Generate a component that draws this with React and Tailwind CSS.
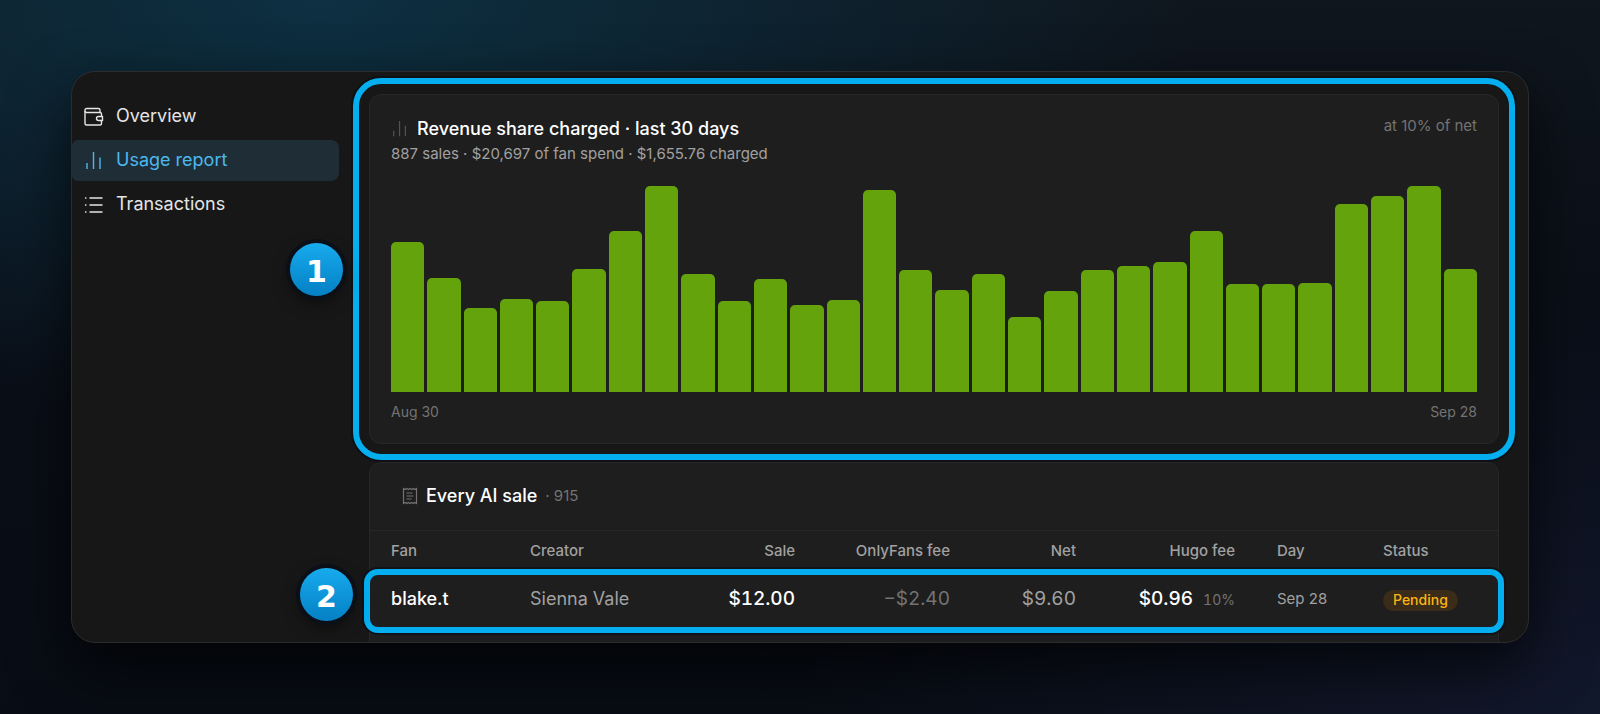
import React from 'react';

const DAYS = [
  150, 114, 84, 93, 91, 123, 161, 206, 118, 91, 113, 87, 92, 202, 122,
  102, 118, 75, 101, 122, 126, 130, 161, 108, 108, 109, 188, 196, 206, 123,
];
const MAX = 206;

function WalletIcon({ className }) {
  return (
    <svg viewBox="0 0 20 20" fill="none" stroke="currentColor" strokeWidth="1.4" strokeLinejoin="round" className={className}>
      <path d="M16 5.500V3.200A1.700 1.700 0 0 0 14.300 1.500H2.500A1.500 1.500 0 0 0 1 3V16.500A1.500 1.500 0 0 0 2.500 18H16A1.500 1.500 0 0 0 17.500 16.500V13.500" />
      <path d="M1 4A1.500 1.500 0 0 0 2.500 5.500H16A1.500 1.500 0 0 1 17.500 7V9.500" />
      <path d="M14.500 9.500H18.500V13.500H14.500A2 2 0 0 1 14.500 9.500Z" />
    </svg>
  );
}

function BarsIcon({ className }) {
  return (
    <svg viewBox="0 0 20 20" fill="none" stroke="currentColor" strokeWidth="1.4" className={className}>
      <path d="M3 12V18M9.500 1V18M16 6.500V18" />
    </svg>
  );
}

function ListIcon({ className }) {
  return (
    <svg viewBox="0 0 20 20" fill="none" stroke="currentColor" strokeWidth="1.4" className={className}>
      <path d="M5.500 3H18.500M5.500 10H18.500M5.500 17H18.500M1 3H2.400M1 10H2.400M1 17H2.400" />
    </svg>
  );
}

function ReceiptIcon({ className }) {
  return (
    <svg viewBox="0 0 16 18" fill="none" stroke="currentColor" strokeWidth="1.2" className={className}>
      <path d="M1.500 1.500L3.100 2.500L4.700 1.500L6.300 2.500L8 1.500L9.700 2.500L11.300 1.500L12.900 2.500L14.500 1.500V16.500L12.900 15.500L11.300 16.500L9.700 15.500L8 16.500L6.300 15.500L4.700 16.500L3.100 15.500L1.500 16.500Z" />
      <path d="M4.500 6H10.500M4.500 9H11.500M4.500 12H9.500" />
    </svg>
  );
}

const NAV = [
  { label: 'Overview', icon: WalletIcon },
  { label: 'Usage report', icon: BarsIcon, active: true },
  { label: 'Transactions', icon: ListIcon },
];

function Sidebar() {
  return (
    <nav className="w-[267px] shrink-0 pt-6">
      <ul className="flex flex-col gap-[3px]">
        {NAV.map(({ label, icon: Icon, active }) => (
          <li key={label}>
            <a
              href="#"
              aria-current={active ? 'page' : undefined}
              className={
                active
                  ? 'flex h-[41px] items-center gap-3 rounded-r-lg rounded-l-md bg-[#1f2e36] pl-3 text-lg text-[#4cb8ee]'
                  : 'flex h-[41px] items-center gap-3 rounded-lg pl-3 text-lg text-neutral-200'
              }
            >
              <Icon className="size-5" />
              <span className="pb-0.5">{label}</span>
            </a>
          </li>
        ))}
      </ul>
    </nav>
  );
}

function Badge({ children, className }) {
  return (
    <span
      className={`absolute flex size-[53px] items-center justify-center rounded-full bg-linear-to-b from-[#17abee] to-[#0580c4] pt-1 font-['DejaVu_Sans',sans-serif] text-[30px] leading-none font-bold text-white shadow-[0_0_0_4px_#0b1018,0_6px_16px_rgba(0,0,0,0.5)] ${className}`}
    >
      {children}
    </span>
  );
}

function RevenueCard() {
  return (
    <section className="relative rounded-xl border border-[#272727] bg-[#1e1e1e] p-[21px]">
      <header className="flex items-start justify-between">
        <div>
          <h2 className="flex items-center gap-2 text-lg leading-[26px] font-medium text-white">
            <BarsIcon className="size-[18px] text-neutral-600" />
            Revenue share charged · last 30 days
          </h2>
          <p className="text-[15px] leading-6 text-neutral-400">887 sales · $20,697 of fan spend · $1,655.76 charged</p>
        </div>
        <span className="text-[15px] leading-5 text-neutral-500">at 10% of net</span>
      </header>
      <div className="mt-5 flex h-[206px] items-end gap-[3px]">
        {DAYS.map((v, i) => (
          <div key={i} className="flex-1 rounded-t-[5px] bg-[#65a30d]" style={{ height: `${(v / MAX) * 100}%` }} />
        ))}
      </div>
      <div className="mt-2.5 flex justify-between text-sm leading-5 text-neutral-500">
        <span>Aug 30</span>
        <span>Sep 28</span>
      </div>
      <div className="pointer-events-none absolute -inset-[17px] rounded-[28px] border-6 border-[#04aeef] shadow-[0_0_0_2px_rgba(6,12,20,0.6)]" />
      <Badge className="top-[148px] -left-[80px]">1</Badge>
    </section>
  );
}

function SalesCard() {
  return (
    <section className="flex-1 rounded-t-xl border border-b-0 border-[#272727] bg-[#1e1e1e]">
      <h2 className="flex h-[68px] items-center gap-2 border-b border-[#272727] pb-0.5 pl-8 text-lg font-medium text-white">
        <ReceiptIcon className="h-[18px] w-4 text-neutral-500" />
        Every AI sale
        <span className="text-[15px] font-normal text-neutral-500">· 915</span>
      </h2>
      <table className="w-full table-fixed text-left">
        <colgroup>
          <col className="w-[139px]" />
          <col className="w-[187px]" />
          <col className="w-[120px]" />
          <col className="w-[155px]" />
          <col className="w-[126px]" />
          <col className="w-[159px]" />
          <col className="w-[106px]" />
          <col className="w-[136px]" />
        </colgroup>
        <thead>
          <tr className="h-[41px] text-[15px] text-neutral-400 *:px-[21px] *:font-medium">
            <th>Fan</th>
            <th>Creator</th>
            <th className="text-right">Sale</th>
            <th className="text-right whitespace-nowrap">OnlyFans fee</th>
            <th className="text-right">Net</th>
            <th className="text-right">Hugo fee</th>
            <th>Day</th>
            <th>Status</th>
          </tr>
        </thead>
        <tbody>
          <tr className="relative h-[56px] text-lg whitespace-nowrap text-neutral-400 *:px-[21px] *:pb-0.5">
            <td className="font-medium text-white">
              blake.t
              <div className="pointer-events-none absolute -inset-x-[6px] -top-[3px] -bottom-[5px] rounded-[14px] border-6 border-[#04aeef] shadow-[0_0_0_2px_rgba(6,12,20,0.6)]" />
              <Badge className="-top-1 -left-[70px]">2</Badge>
            </td>
            <td>Sienna Vale</td>
            <td className="text-right text-[19px] font-medium text-white tabular-nums">$12.00</td>
            <td className="text-right text-[19px] text-neutral-500 tabular-nums">−$2.40</td>
            <td className="text-right text-[19px] tabular-nums">$9.60</td>
            <td className="text-right text-[19px] tabular-nums">
              <span className="font-medium text-white">$0.96</span>
              <span className="ml-2.5 text-sm text-neutral-500">10%</span>
            </td>
            <td className="text-[15px]">Sep 28</td>
            <td>
              <span className="inline-flex h-[21px] items-center rounded-full bg-[#3a2c18] px-2.5 text-sm font-medium text-[#fbb515]">Pending</span>
            </td>
          </tr>
        </tbody>
      </table>
    </section>
  );
}

export default function App() {
  return (
    <div className="flex min-h-screen bg-[#0a0e16] bg-[radial-gradient(ellipse_55%_60%_at_20%_0%,#0d3042,transparent),radial-gradient(ellipse_50%_60%_at_100%_100%,#12182c,transparent),linear-gradient(to_bottom,#0f161e,#0a0e17_50%,#080c14)] p-[71px] font-['Inter','Noto_Sans',sans-serif]">
      <div className="flex flex-1 overflow-hidden rounded-3xl border border-[#2a2c2e] bg-[#171717] shadow-[0_24px_60px_rgba(0,0,0,0.7)]">
        <Sidebar />
        <main className="ml-[30px] flex flex-1 flex-col gap-[18px] pt-[22px] pr-[29px]">
          <RevenueCard />
          <SalesCard />
        </main>
      </div>
    </div>
  );
}
